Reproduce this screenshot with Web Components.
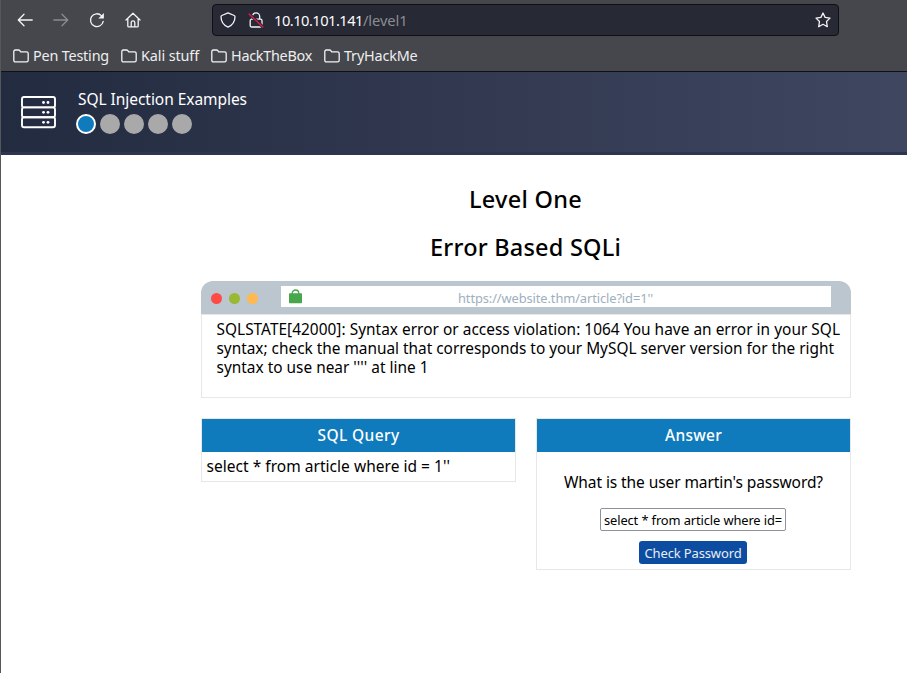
<!DOCTYPE html>
<html lang="en">
<head>
<meta charset="utf-8">
<title>SQL Injection Examples</title>
<style>
html,body{margin:0;height:100%;background:#fff}
body{font-family:"Noto Sans","Open Sans",sans-serif;color:#000;overflow:hidden}
</style>
</head>
<body>
<app-window></app-window>
<script>
const define = (name, html, setup) => {
  const t = document.createElement('template');
  t.innerHTML = html;
  customElements.define(name, class extends HTMLElement {
    connectedCallback() {
      if (this.shadowRoot) return;
      this.attachShadow({mode: 'open'}).append(t.content.cloneNode(true));
      if (setup) setup(this, this.shadowRoot);
    }
  });
};

/* One line of text whose tracking is adjusted to span a given width. */
define('fit-text', `<style>
:host{display:block;white-space:nowrap;flex:none}
span{display:inline-block;white-space:pre}
</style><span><slot></slot></span>`, (host, root) => {
  const want = parseFloat(host.getAttribute('w'));
  host.style.width = want + 'px';
  const span = root.querySelector('span');
  const have = span.getBoundingClientRect().width;
  const n = host.textContent.length;
  span.style.letterSpacing = ((want - have) / n) + 'px';
});

const ICONS = {
  back: '<path d="M15.2 8H1.5M7 2.3 1.3 8 7 13.7"/>',
  forward: '<path d="M.8 8h13.7M9 2.3 14.7 8 9 13.7"/>',
  reload: '<path d="M14.2 9.300A6.400 6.400 0 1 1 12.400 3.600"/><path d="M14.900 1v5.600H9.300z" fill="currentColor" stroke="none"/>',
  home: '<path d="M1 8 8 1.2 15 8M2.8 6.8v7.1c0 .6.4 1 1 1h8.4c.6 0 1-.4 1-1V6.8M6.2 14.8v-4.2c0-1 .8-1.8 1.8-1.8s1.8.8 1.8 1.8v4.2"/>',
  shield: '<path d="M8 .9 14.2 3.5c.5.2.8.6.8 1.1 0 4-1.5 8.300-7 10.600C2.500 12.900 1 8.600 1 4.600c0-.5.3-.9.8-1.100z"/>',
  lock: '<path d="M4.300 7V4.800C4.300 2.500 5.900.9 8 .9s3.700 1.600 3.700 3.900V7M3.800 7.200h8.700c1 0 1.500.6 1.500 1.500v4.800c0 .9-.6 1.500-1.500 1.500H3.700c-.9 0-1.500-.6-1.500-1.500V8.700c0-.9.6-1.500 1.600-1.500"/><path d="M1.400 2 14.800 14.900" stroke="#272935" stroke-width="3"/><path d="M1 2 14.800 15" stroke="#e5194e"/>',
  star: '<path d="M8 1 10.100 5.400 15 6.100 11.500 9.500 12.300 14.700 8 12.300 3.700 14.700 4.500 9.500 1 6.100 5.900 5.400z"/>',
  folder: '<path d="M.8 3.500c0-.9.6-1.500 1.500-1.500h3.200c.6 0 1 .2 1.300.6l.9 1.200h5.900c1 0 1.600.6 1.600 1.600v6.900c0 1-.6 1.600-1.600 1.600H2.400c-1 0-1.600-.6-1.600-1.600z"/>'
};
define('tool-icon', `<style>
:host{display:block;width:16px;height:16px;flex:none;color:#f4f4f5}
svg{display:block;width:100%;height:100%;fill:none;stroke:currentColor;stroke-width:1.3;stroke-linecap:round;stroke-linejoin:round}
</style><svg viewBox="0 0 16 16"></svg>`, (host, root) => {
  root.querySelector('svg').innerHTML = ICONS[host.getAttribute('name')];
});

define('book-mark', `<style>
:host{display:flex;align-items:center;gap:4px;color:#eeeeef;font-size:14.4px;line-height:20px}
</style><tool-icon name="folder"></tool-icon><slot></slot>`);

define('browser-bar', `<style>
:host{display:block;box-sizing:border-box;height:72px;background:#45474c;border-bottom:1px solid #101114}
.nav{display:flex;align-items:center;height:40px;padding-left:16px}
.nav>tool-icon{margin-right:20px}
.nav>tool-icon[name=home]{margin-right:71px}
.dim{opacity:.4}
.url{display:flex;align-items:center;box-sizing:border-box;width:627px;height:32px;background:#272935;border:1px solid #0f1014;border-radius:4px;padding:0 7px;font-size:14.700px;line-height:20px;color:#fbfbfe}
.url tool-icon{margin-right:12px}
.url tool-icon[name=lock]{margin-right:10px}
.url .path{color:#8c8c93}
.url tool-icon[name=star]{margin:0 0 0 auto}
.marks{display:flex;gap:12px;padding-left:12px;height:31px;align-items:center}
</style>
<div class="nav">
<tool-icon name="back"></tool-icon><tool-icon class="dim" name="forward"></tool-icon><tool-icon name="reload"></tool-icon><tool-icon name="home"></tool-icon>
<div class="url"><tool-icon name="shield"></tool-icon><tool-icon name="lock"></tool-icon><fit-text w="89">10.10.101.141</fit-text><fit-text class="path" w="44.500">/level1</fit-text><tool-icon name="star"></tool-icon></div>
</div>
<div class="marks">
<book-mark><fit-text w="76">Pen Testing</fit-text></book-mark>
<book-mark><fit-text w="58">Kali stuff</fit-text></book-mark>
<book-mark><fit-text w="81">HackTheBox</fit-text></book-mark>
<book-mark><fit-text w="73.500">TryHackMe</fit-text></book-mark>
</div>`);

define('level-dots', `<style>
:host{display:flex;gap:4px}
i{box-sizing:border-box;width:20px;height:20px;border-radius:50%;background:#a9a9a9}
.on{background:#0f7abc;border:2px solid #fff}
</style><i class="on"></i><i></i><i></i><i></i><i></i>`);

define('site-header', `<style>
:host{display:flex;box-sizing:border-box;height:83px;padding:23px 0 0 19px;gap:19px;background:linear-gradient(to right,#232b40,#3f4660);border-bottom:3px solid #2d3550;color:#fff}
svg{display:block;width:37px;height:35px;flex:none}
.t{display:flex;flex-direction:column;margin-top:-7px;font-size:15.500px;line-height:22px}
fit-text{margin-left:2px}
level-dots{margin-top:4px}
</style>
<svg viewBox="0 0 37 35" fill="none" stroke="#fff" stroke-width="1.900"><rect x="2" y="2" width="33" height="10.400" rx="2"/><rect x="2" y="12.400" width="33" height="9.800" rx="2"/><rect x="2" y="22.200" width="33" height="10" rx="2"/><g fill="#fff" stroke="none"><circle cx="23.500" cy="7.500" r="1.400"/><circle cx="28" cy="7.500" r="1.400"/><circle cx="23.500" cy="17.300" r="1.400"/><circle cx="28" cy="17.300" r="1.400"/><circle cx="23.500" cy="27.300" r="1.400"/><circle cx="28" cy="27.300" r="1.400"/></g></svg>
<div class="t"><fit-text w="169">SQL Injection Examples</fit-text><level-dots></level-dots></div>`);

define('mock-browser', `<style>
:host{display:block}
.bar{display:flex;align-items:flex-start;box-sizing:border-box;height:33px;background:#bbc6cf;border-radius:12px 12px 0 0;padding:5px 20px 0 10px}
.dots{display:flex;gap:7px;margin-top:7px;width:70px}
.dots i{width:11px;height:11px;border-radius:50%;background:#ff4a46}
.dots i+i{background:#98b931}.dots i+i+i{background:#ffb950}
.addr{display:flex;width:550px;height:21px;background:#fff;color:#9eafbe;font-size:12.900px;line-height:24px}
.addr svg{width:13px;height:15px;margin:3px 156px 0 8px}
.body{box-sizing:border-box;height:84px;border:1px solid #e7e7e7;padding:5px 0 0 14.500px;font-size:15.400px;line-height:19px}
</style>
<div class="bar"><div class="dots"><i></i><i></i><i></i></div><div class="addr"><svg viewBox="0 0 13 15"><path d="M3.200 6V4.300a3.300 3.300 0 0 1 6.600 0V6" fill="none" stroke="#48a64c" stroke-width="1.300"/><rect y="4.300" width="13" height="10" rx=".7" fill="#48a64c"/></svg><slot name="url"></slot></div></div>
<div class="body"><slot></slot></div>`);

define('info-panel', `<style>
:host{display:block;box-sizing:border-box;width:315px;border:1px solid #e7e7e7}
.head{display:flex;justify-content:center;height:33px;line-height:32px;background:#0f7abc;color:#fff;font-weight:500;font-size:15.500px}
</style><div class="head"><slot name="title"></slot></div><slot></slot>`);

define('answer-form', `<style>
:host{display:flex;flex-direction:column;align-items:center;height:117px;font-size:15.500px}
.q{margin-top:19px;line-height:22px}
.in{display:flex;box-sizing:border-box;width:186px;height:23px;margin:15px 1px 0 0;padding-left:3px;border:1px solid #8f8f9d;border-radius:2px;font-size:12.900px;line-height:22px}
.btn{display:flex;justify-content:center;width:108px;height:23px;margin:10px 1px 0 0;background:#0c4da2;border-radius:3px;color:#e9edf4;font-size:13px;line-height:24px}
</style>
<fit-text class="q" w="259">What is the user martin's password?</fit-text>
<div class="in"><fit-text w="178">select * from article where id=</fit-text></div>
<div class="btn"><fit-text w="97">Check Password</fit-text></div>`);

define('level-page', `<style>
:host{display:block;width:650px;padding-top:28px}
h2{display:flex;justify-content:center;margin:0;height:48px;line-height:32px;font-size:23.500px;font-weight:500}
h2 fit-text{margin-right:1px}
mock-browser{margin-top:2px}
.cols{display:flex;justify-content:space-between;align-items:flex-start;margin-top:20px}
.query{height:29px;padding-left:4.500px;font-size:15.500px;line-height:28px}
</style>
<h2><fit-text w="113">Level One</fit-text></h2>
<h2><fit-text w="191">Error Based SQLi</fit-text></h2>
<mock-browser><fit-text slot="url" w="195">https://website.thm/article?id=1''</fit-text>
<fit-text w="623.500">SQLSTATE[42000]: Syntax error or access violation: 1064 You have an error in your SQL</fit-text>
<fit-text w="617.500">syntax; check the manual that corresponds to your MySQL server version for the right</fit-text>
<fit-text w="212">syntax to use near '''' at line 1</fit-text></mock-browser>
<div class="cols">
<info-panel><fit-text slot="title" w="82">SQL Query</fit-text><div class="query"><fit-text w="243.500">select * from article where id = 1''</fit-text></div></info-panel>
<info-panel><fit-text slot="title" w="57">Answer</fit-text><answer-form></answer-form></info-panel>
</div>`);

define('app-window', `<style>
:host{display:block;box-sizing:border-box;width:907px;height:673px;border-left:1px solid #55575b;background:#fff}
level-page{margin-left:200px}
</style><browser-bar></browser-bar><site-header></site-header><level-page></level-page>`);
</script>
</body>
</html>
